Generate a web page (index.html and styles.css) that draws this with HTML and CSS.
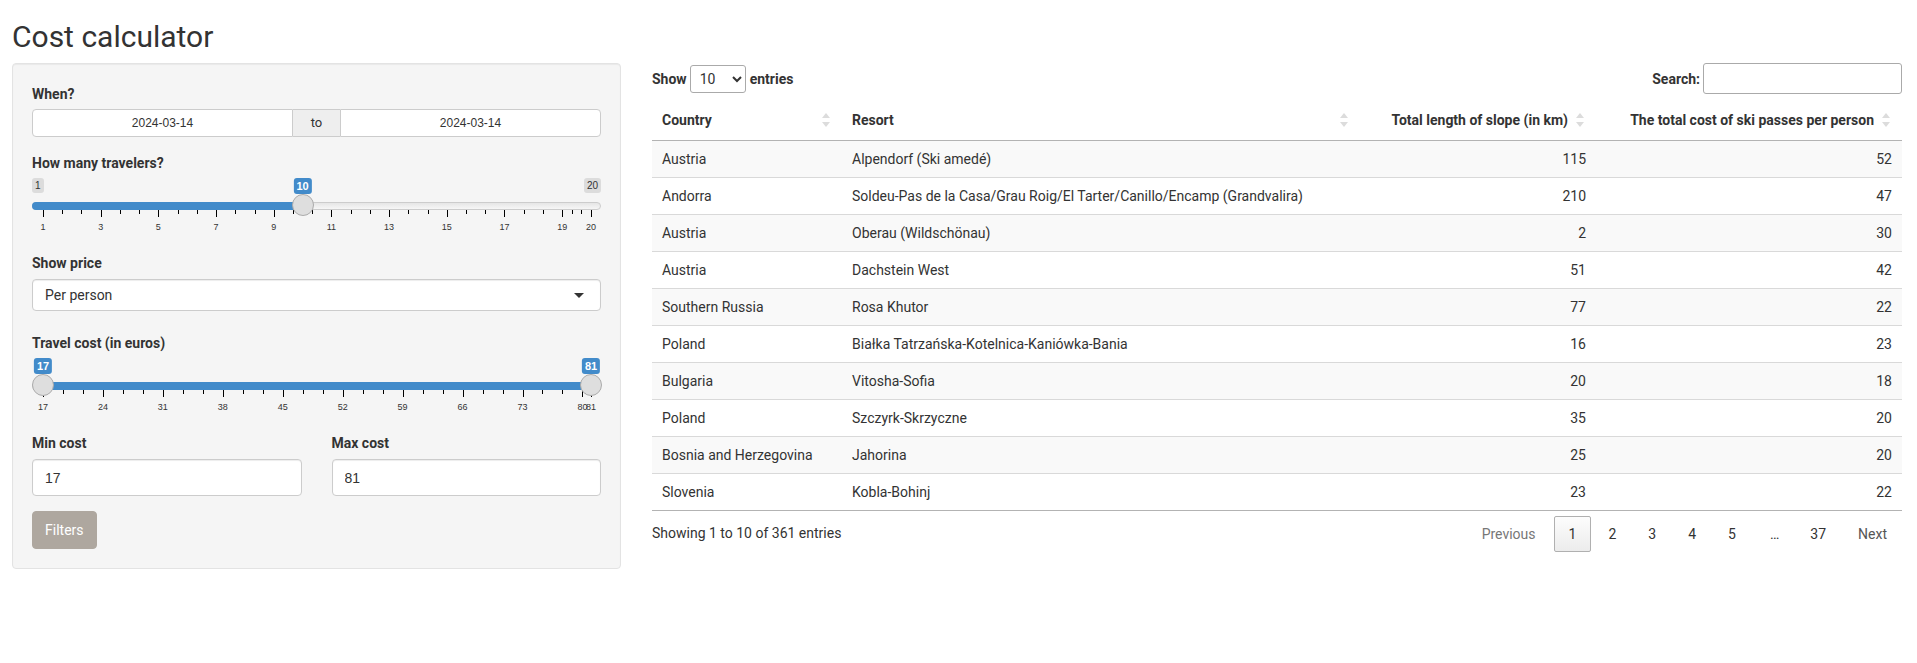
FILE: index.html
```html
<!DOCTYPE html>
<html lang="en">
<head>
<meta charset="utf-8">
<title>Cost calculator</title>
<link rel="stylesheet" href="styles.css">
</head>
<body>
<div class="page">
  <h2 class="title">Cost calculator</h2>
  <div class="layout">
    <aside class="well">
      <div class="form-group form-group-date">
        <label class="control-label">When?</label>
        <div class="date-range">
          <input class="date-field date-left" type="text" value="2024-03-14" readonly>
          <span class="date-addon">to</span>
          <input class="date-field date-right" type="text" value="2024-03-14" readonly>
        </div>
      </div>

      <div class="form-group">
        <label class="control-label">How many travelers?</label>
        <div class="irs">
          <span class="irs-line"></span>
          <span class="irs-bar irs-bar-single" style="width:271px"></span>
          <span class="irs-minmax irs-min">1</span>
          <span class="irs-minmax irs-max">20</span>
          <div class="irs-track">
            <span class="irs-badge" style="left:47.368%">10</span>
            <span class="irs-handle" style="left:47.368%"></span>
          </div>
          <div class="irs-grid">
            <span class="pol" style="left:0%"></span><span class="pol small" style="left:3.509%"></span><span class="pol small" style="left:7.018%"></span>
            <span class="pol" style="left:10.526%"></span><span class="pol small" style="left:14.035%"></span><span class="pol small" style="left:17.544%"></span>
            <span class="pol" style="left:21.053%"></span><span class="pol small" style="left:24.561%"></span><span class="pol small" style="left:28.070%"></span>
            <span class="pol" style="left:31.579%"></span><span class="pol small" style="left:35.088%"></span><span class="pol small" style="left:38.596%"></span>
            <span class="pol" style="left:42.105%"></span><span class="pol small" style="left:45.614%"></span><span class="pol small" style="left:49.123%"></span>
            <span class="pol" style="left:52.632%"></span><span class="pol small" style="left:56.140%"></span><span class="pol small" style="left:59.649%"></span>
            <span class="pol" style="left:63.158%"></span><span class="pol small" style="left:66.667%"></span><span class="pol small" style="left:70.175%"></span>
            <span class="pol" style="left:73.684%"></span><span class="pol small" style="left:77.193%"></span><span class="pol small" style="left:80.702%"></span>
            <span class="pol" style="left:84.211%"></span><span class="pol small" style="left:87.719%"></span><span class="pol small" style="left:91.228%"></span>
            <span class="pol" style="left:94.737%"></span><span class="pol small" style="left:96.491%"></span><span class="pol small" style="left:98.246%"></span>
            <span class="pol" style="left:100%"></span>
            <span class="grid-text" style="left:0%">1</span>
            <span class="grid-text" style="left:10.526%">3</span>
            <span class="grid-text" style="left:21.053%">5</span>
            <span class="grid-text" style="left:31.579%">7</span>
            <span class="grid-text" style="left:42.105%">9</span>
            <span class="grid-text" style="left:52.632%">11</span>
            <span class="grid-text" style="left:63.158%">13</span>
            <span class="grid-text" style="left:73.684%">15</span>
            <span class="grid-text" style="left:84.211%">17</span>
            <span class="grid-text" style="left:94.737%">19</span>
            <span class="grid-text" style="left:100%">20</span>
          </div>
        </div>
      </div>

      <div class="form-group form-group-select">
        <label class="control-label">Show price</label>
        <div class="selectize">
          <span class="selectize-value">Per person</span>
          <span class="caret"></span>
        </div>
      </div>

      <div class="form-group">
        <label class="control-label">Travel cost (in euros)</label>
        <div class="irs">
          <span class="irs-line"></span>
          <div class="irs-track">
            <span class="irs-bar irs-bar-range" style="left:0%;width:100%"></span>
            <span class="irs-badge" style="left:0%">17</span>
            <span class="irs-badge" style="left:100%">81</span>
            <span class="irs-handle" style="left:0%"></span>
            <span class="irs-handle" style="left:100%"></span>
          </div>
          <div class="irs-grid">
            <span class="pol" style="left:0%"></span><span class="pol small" style="left:3.646%"></span><span class="pol small" style="left:7.292%"></span>
            <span class="pol" style="left:10.938%"></span><span class="pol small" style="left:14.583%"></span><span class="pol small" style="left:18.229%"></span>
            <span class="pol" style="left:21.875%"></span><span class="pol small" style="left:25.521%"></span><span class="pol small" style="left:29.167%"></span>
            <span class="pol" style="left:32.813%"></span><span class="pol small" style="left:36.458%"></span><span class="pol small" style="left:40.104%"></span>
            <span class="pol" style="left:43.75%"></span><span class="pol small" style="left:47.396%"></span><span class="pol small" style="left:51.042%"></span>
            <span class="pol" style="left:54.688%"></span><span class="pol small" style="left:58.333%"></span><span class="pol small" style="left:61.979%"></span>
            <span class="pol" style="left:65.625%"></span><span class="pol small" style="left:69.271%"></span><span class="pol small" style="left:72.917%"></span>
            <span class="pol" style="left:76.563%"></span><span class="pol small" style="left:80.208%"></span><span class="pol small" style="left:83.854%"></span>
            <span class="pol" style="left:87.5%"></span><span class="pol small" style="left:91.146%"></span><span class="pol small" style="left:94.792%"></span>
            <span class="pol" style="left:98.438%"></span><span class="pol small" style="left:98.958%"></span><span class="pol small" style="left:99.479%"></span>
            <span class="pol" style="left:100%"></span>
            <span class="grid-text" style="left:0%">17</span>
            <span class="grid-text" style="left:10.938%">24</span>
            <span class="grid-text" style="left:21.875%">31</span>
            <span class="grid-text" style="left:32.813%">38</span>
            <span class="grid-text" style="left:43.75%">45</span>
            <span class="grid-text" style="left:54.688%">52</span>
            <span class="grid-text" style="left:65.625%">59</span>
            <span class="grid-text" style="left:76.563%">66</span>
            <span class="grid-text" style="left:87.5%">73</span>
            <span class="grid-text" style="left:98.438%">80</span>
            <span class="grid-text" style="left:100%">81</span>
          </div>
        </div>
      </div>

      <div class="cost-row">
        <div class="form-group cost-col">
          <label class="control-label">Min cost</label>
          <input class="form-control" type="text" value="17">
        </div>
        <div class="form-group cost-col">
          <label class="control-label">Max cost</label>
          <input class="form-control" type="text" value="81">
        </div>
      </div>

      <button class="btn" type="button">Filters</button>
    </aside>

    <main class="main">
      <div class="dt-top">
        <label class="dt-length">Show <select class="dt-select"><option>10</option><option>25</option><option>50</option><option>100</option></select> entries</label>
        <label class="dt-filter">Search:<input class="dt-search" type="search"></label>
      </div>

      <table class="dt-table">
        <colgroup>
          <col class="c1"><col class="c2"><col class="c3"><col class="c4">
        </colgroup>
        <thead>
          <tr>
            <th class="sortable">Country</th>
            <th class="sortable">Resort</th>
            <th class="sortable num">Total length of slope (in km)</th>
            <th class="sortable num">The total cost of ski passes per person</th>
          </tr>
        </thead>
        <tbody>
          <tr><td>Austria</td><td>Alpendorf (Ski amedé)</td><td class="num">115</td><td class="num">52</td></tr>
          <tr><td>Andorra</td><td>Soldeu-Pas de la Casa/Grau Roig/El Tarter/Canillo/Encamp (Grandvalira)</td><td class="num">210</td><td class="num">47</td></tr>
          <tr><td>Austria</td><td>Oberau (Wildschönau)</td><td class="num">2</td><td class="num">30</td></tr>
          <tr><td>Austria</td><td>Dachstein West</td><td class="num">51</td><td class="num">42</td></tr>
          <tr><td>Southern Russia</td><td>Rosa Khutor</td><td class="num">77</td><td class="num">22</td></tr>
          <tr><td>Poland</td><td>Białka Tatrzańska-Kotelnica-Kaniówka-Bania</td><td class="num">16</td><td class="num">23</td></tr>
          <tr><td>Bulgaria</td><td>Vitosha-Sofia</td><td class="num">20</td><td class="num">18</td></tr>
          <tr><td>Poland</td><td>Szczyrk-Skrzyczne</td><td class="num">35</td><td class="num">20</td></tr>
          <tr><td>Bosnia and Herzegovina</td><td>Jahorina</td><td class="num">25</td><td class="num">20</td></tr>
          <tr><td>Slovenia</td><td>Kobla-Bohinj</td><td class="num">23</td><td class="num">22</td></tr>
        </tbody>
      </table>

      <div class="dt-bottom">
        <div class="dt-info">Showing 1 to 10 of 361 entries</div>
        <div class="dt-paginate">
          <span class="pg-btn pg-disabled">Previous</span>
          <span class="pg-btn pg-current">1</span>
          <span class="pg-btn">2</span>
          <span class="pg-btn">3</span>
          <span class="pg-btn">4</span>
          <span class="pg-btn">5</span>
          <span class="pg-ellipsis">…</span>
          <span class="pg-btn">37</span>
          <span class="pg-btn pg-next">Next</span>
        </div>
      </div>
    </main>
  </div>
</div>
</body>
</html>
```
FILE: styles.css
```css
* { box-sizing: border-box; }

html, body {
  margin: 0;
  padding: 0;
  background: #fff;
}

body {
  font-family: Roboto, "Liberation Sans", Arial, sans-serif;
  font-size: 14px;
  line-height: 20px;
  color: #333;
}

.page {
  padding: 0 15px 0 12px;
}

.title {
  margin: 20px 0 10px;
  font-size: 30px;
  line-height: 33px;
  font-weight: 400;
  color: #333;
}

.layout {
  display: flex;
  align-items: flex-start;
  gap: 31px;
}

/* ---------- sidebar ---------- */
.well {
  width: 609px;
  flex: 0 0 609px;
  padding: 20px 19px 19px;
  background: #f5f5f5;
  border: 1px solid #e3e3e3;
  border-radius: 4px;
  box-shadow: inset 0 1px 1px rgba(0, 0, 0, 0.05);
}

.form-group {
  margin-bottom: 15px;
}

.form-group-date {
  margin-bottom: 16px;
}

.form-group-select {
  margin-bottom: 22px;
}

.form-group-select .control-label {
  margin-bottom: 6px;
}

.control-label {
  display: block;
  margin-bottom: 5px;
  font-weight: 700;
  line-height: 20px;
}

.cost-row .control-label {
  margin-bottom: 6px;
}

.date-range {
  display: flex;
  height: 28px;
}

.date-field {
  flex: 1 1 0;
  min-width: 0;
  height: 28px;
  margin: 0;
  padding: 0 6px;
  border: 1px solid #ccc;
  background: #fff;
  text-align: center;
  font-family: "Liberation Sans", Arial, sans-serif;
  font-size: 12px;
  color: #333;
  outline: none;
}

.date-left { border-radius: 4px 0 0 4px; }
.date-right { border-radius: 0 4px 4px 0; }

.date-addon {
  flex: 0 0 47px;
  display: flex;
  align-items: center;
  justify-content: center;
  background: #eee;
  border-top: 1px solid #ccc;
  border-bottom: 1px solid #ccc;
  font-size: 13px;
  color: #333;
}

/* ion range slider (shiny skin) */
.irs {
  position: relative;
  height: 60px;
  font-family: "Liberation Sans", Arial, sans-serif;
}

.irs-line {
  position: absolute;
  left: 0;
  right: 0;
  top: 24px;
  height: 8px;
  border: 1px solid #ccc;
  border-radius: 8px;
  background: linear-gradient(to bottom, #ddd -50%, #fff 150%);
}

.irs-bar {
  position: absolute;
  top: 24px;
  height: 8px;
  background: #428bca;
}

.irs-bar-single {
  left: 0;
  border-radius: 8px 0 0 8px;
}

.irs-track {
  position: absolute;
  left: 11px;
  right: 10px;
  top: 0;
  height: 40px;
}

.irs-minmax {
  position: absolute;
  top: 0;
  padding: 1px 3px;
  font-size: 10px;
  line-height: 13px;
  color: #333;
  background: rgba(0, 0, 0, 0.1);
  border-radius: 3px;
}

.irs-min { left: 0; }
.irs-max { right: 0; }

.irs-badge {
  position: absolute;
  top: 0;
  transform: translateX(-50%);
  padding: 1px 3px;
  font-size: 11px;
  font-weight: 700;
  line-height: 14px;
  color: #fff;
  background: #428bca;
  border-radius: 3px;
  white-space: nowrap;
}

.irs-handle {
  position: absolute;
  top: 16px;
  width: 22px;
  height: 22px;
  margin-left: -11px;
  border: 1px solid #ababab;
  border-radius: 50%;
  background: #dedede;
  z-index: 2;
}

.irs-grid {
  position: absolute;
  left: 11px;
  right: 10px;
  top: 32px;
  height: 28px;
}

.pol {
  position: absolute;
  top: 0;
  width: 1px;
  height: 7px;
  background: #000;
}

.pol.small {
  height: 4px;
}

.grid-text {
  position: absolute;
  top: 13px;
  transform: translateX(-50%);
  font-size: 9px;
  line-height: 9px;
  color: #333;
  white-space: nowrap;
}

.selectize {
  position: relative;
  display: flex;
  align-items: center;
  height: 32px;
  padding: 0 12px;
  background: #fff;
  border: 1px solid #ccc;
  border-radius: 4px;
  box-shadow: inset 0 1px 1px rgba(0, 0, 0, 0.075);
}

.selectize-value {
  color: #333;
}

.caret {
  position: absolute;
  right: 16px;
  top: 13px;
  width: 0;
  height: 0;
  border-left: 5px solid transparent;
  border-right: 5px solid transparent;
  border-top: 5px solid #333;
}

.cost-row {
  display: flex;
  gap: 30px;
}

.cost-col {
  flex: 1 1 0;
  min-width: 0;
}

.form-control {
  display: block;
  width: 100%;
  height: 37px;
  margin: 0;
  padding: 6px 12px;
  background: #fff;
  border: 1px solid #ccc;
  border-radius: 4px;
  box-shadow: inset 0 1px 1px rgba(0, 0, 0, 0.075);
  font-family: "Liberation Sans", Arial, sans-serif;
  font-size: 14px;
  color: #333;
  outline: none;
}

.btn {
  display: block;
  height: 38px;
  padding: 8px 12px;
  border: 1px solid #aea79f;
  border-radius: 4px;
  background: #aea79f;
  color: #fff;
  font-family: Roboto, "Liberation Sans", Arial, sans-serif;
  font-size: 14px;
  line-height: 20px;
  cursor: pointer;
}

/* ---------- main / datatable ---------- */
.main {
  flex: 1 1 auto;
  min-width: 0;
}

.dt-top {
  display: flex;
  justify-content: space-between;
  align-items: center;
  height: 31px;
  margin-bottom: 6px;
}

.dt-length,
.dt-filter {
  display: flex;
  align-items: center;
  font-weight: 700;
}

.dt-select {
  width: 56px;
  height: 28px;
  margin: 0 4px 0 3px;
  padding: 0 4px 0 5px;
  border: 1px solid #aaa;
  border-radius: 3px;
  background: #fff;
  font-family: Roboto, "Liberation Sans", Arial, sans-serif;
  font-size: 14px;
  color: #333;
}

.dt-search {
  width: 199px;
  height: 31px;
  margin: 0 0 0 3px;
  padding: 4px;
  border: 1px solid #aaa;
  border-radius: 3px;
  background: #fff;
  font-size: 14px;
  outline: none;
}

.dt-table {
  width: 100%;
  table-layout: fixed;
  border-collapse: collapse;
  border-bottom: 1px solid #b3b3b3;
}

.c1 { width: 190px; }
.c2 { width: 518px; }
.c3 { width: 236px; }
.c4 { width: 306px; }

.dt-table th {
  position: relative;
  height: 40px;
  padding: 10px 28px 10px 10px;
  text-align: left;
  font-weight: 700;
  line-height: 20px;
  border-bottom: 1px solid #b3b3b3;
  white-space: nowrap;
}

.dt-table th.num {
  text-align: right;
}

.sortable::before,
.sortable::after {
  content: "";
  position: absolute;
  right: 12px;
  width: 0;
  height: 0;
  border-left: 4px solid transparent;
  border-right: 4px solid transparent;
}

.sortable::before {
  top: 13px;
  border-bottom: 5px solid #dcdcdc;
}

.sortable::after {
  top: 22px;
  border-top: 5px solid #dcdcdc;
}

.dt-table td {
  height: 36px;
  padding: 8px 10px;
  line-height: 20px;
  border-top: 1px solid #d9d9d9;
  white-space: nowrap;
}

.dt-table tbody tr:first-child td {
  border-top: none;
}

.dt-table tbody tr:nth-child(odd) td {
  background: #f9f9f9;
}

.dt-table td.num {
  text-align: right;
}

.dt-bottom {
  display: flex;
  justify-content: space-between;
  align-items: flex-start;
}

.dt-info {
  padding-top: 12px;
  line-height: 20px;
}

.dt-paginate {
  display: flex;
  align-items: center;
  padding-top: 5px;
}

.pg-btn {
  display: inline-block;
  min-width: 21px;
  margin-left: 2px;
  padding: 7px 14px;
  line-height: 20px;
  text-align: center;
  border: 1px solid transparent;
  border-radius: 2px;
  color: #333;
  cursor: pointer;
}

.pg-disabled {
  padding-left: 16px;
  padding-right: 15px;
  color: #777;
  cursor: default;
}

.pg-next {
  color: #555;
}

.pg-current {
  border: 1px solid #b0b0b0;
  background: linear-gradient(to bottom, #fdfdfd 0%, #ececec 100%);
}

.pg-ellipsis {
  padding: 0 14px 0 19px;
  line-height: 20px;
  color: #333;
}
```
